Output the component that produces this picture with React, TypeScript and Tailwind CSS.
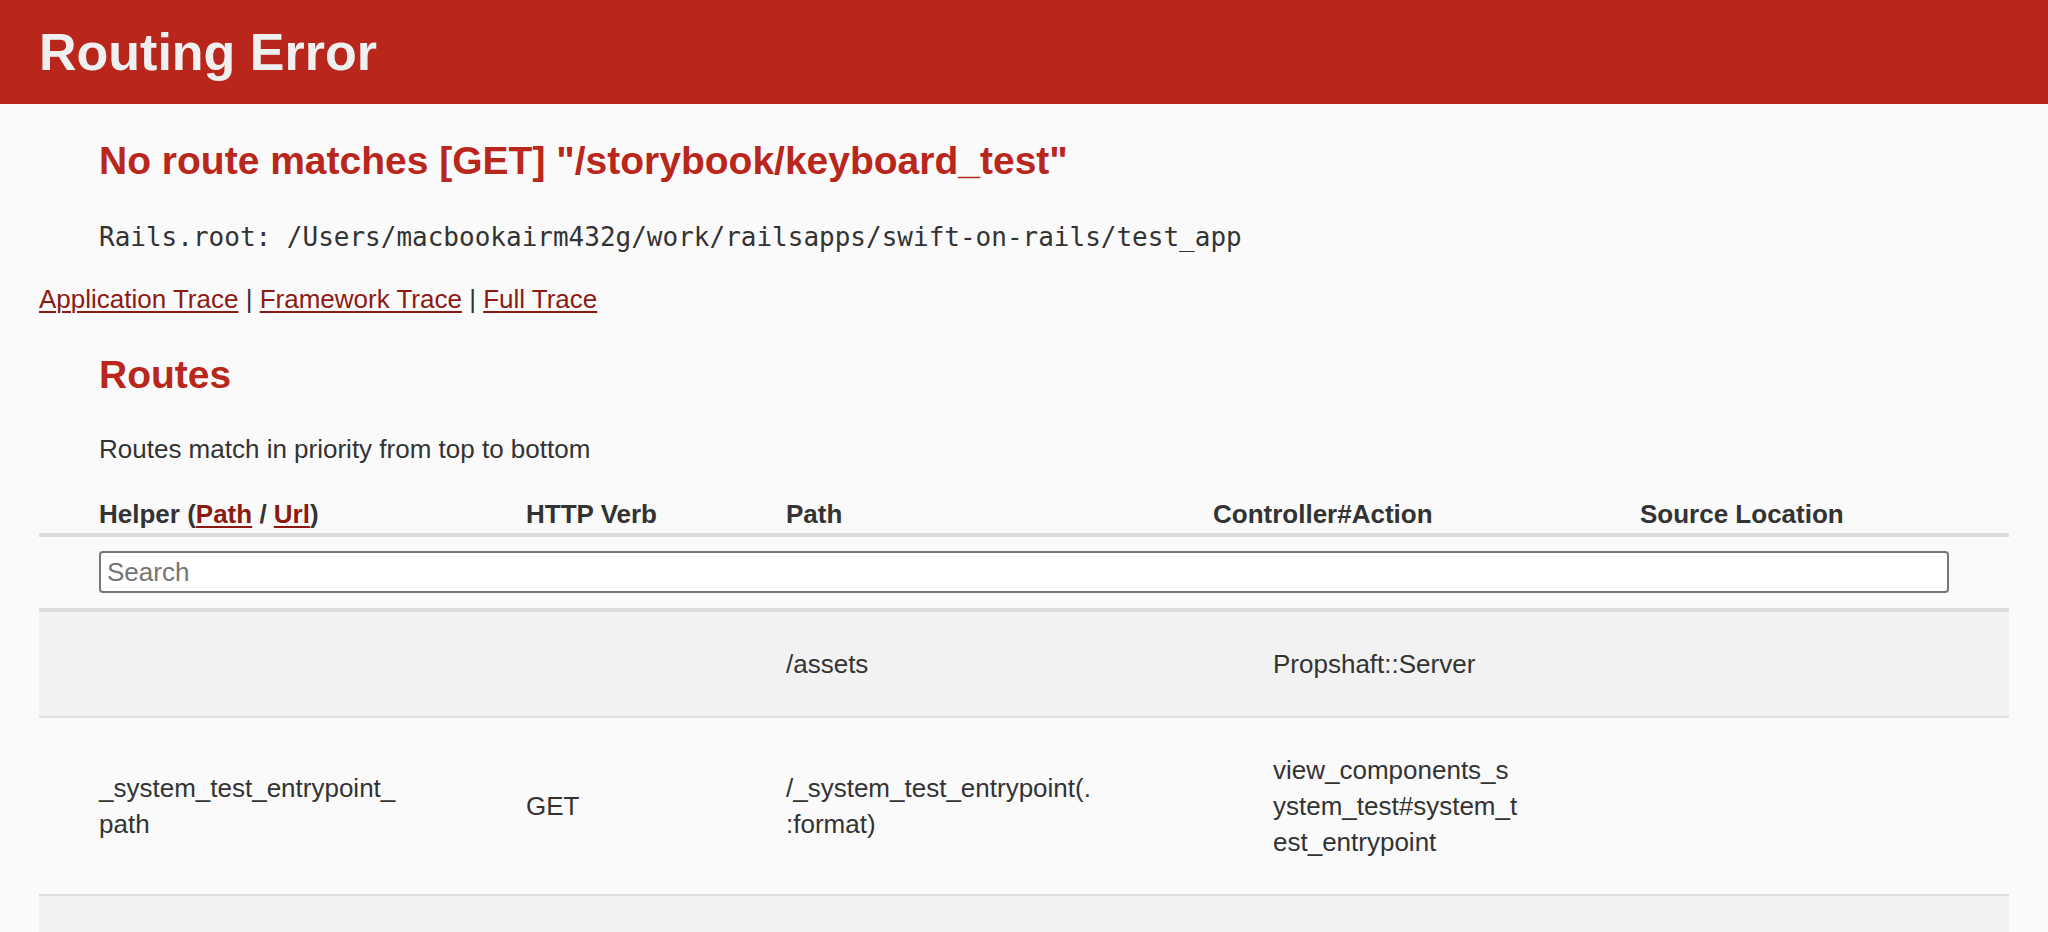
import React from "react";

const RED = "text-[#b9261b]";
const COLS = "grid grid-cols-[427px_260px_427px_427px_429px]";

type Route = {
  helper: string;
  verb: string;
  path: string;
  action: string;
};

const routes: Route[] = [
  { helper: "", verb: "", path: "/assets", action: "Propshaft::Server" },
  {
    helper: "_system_test_entrypoint_path",
    verb: "GET",
    path: "/_system_test_entrypoint(.:format)",
    action: "view_components_system_test#system_test_entrypoint",
  },
];

function TraceLink({ children }: { children: React.ReactNode }) {
  return (
    <a href="#" className="text-[#8c1a13] underline decoration-2 underline-offset-[3px]">
      {children}
    </a>
  );
}

export default function App() {
  return (
    <div className="min-h-screen bg-[#fafafa] text-[#333] font-['Liberation_Sans',Arial,sans-serif]">
      {/* Header */}
      <header className="h-[104px] flex items-center bg-[#b9261b] px-[39px] text-[#f0f0f0]">
        <h1 className="text-[52px] leading-[57px] font-bold">Routing Error</h1>
      </header>

      <div className="px-[39px]">
        <h2 className={`mt-[32px] pl-[60px] text-[39px] leading-[50px] font-bold ${RED}`}>
          No route matches [GET] "/storybook/keyboard_test"
        </h2>

        <p className="mt-[33px] pl-[60px] font-['DejaVu_Sans_Mono',monospace] text-[26px] leading-[36px]">
          Rails.root: /Users/macbookairm432g/work/railsapps/swift-on-rails/test_app
        </p>

        <div className="mt-[26px] text-[26px] leading-[36px]">
          <TraceLink>Application Trace</TraceLink> | <TraceLink>Framework Trace</TraceLink> |{" "}
          <TraceLink>Full Trace</TraceLink>
        </div>

        <h2 className={`mt-[33px] pl-[60px] text-[39px] leading-[50px] font-bold ${RED}`}>Routes</h2>

        <p className="mt-[31px] pl-[60px] text-[26px] leading-[36px]">
          Routes match in priority from top to bottom
        </p>

        {/* Route table */}
        <div className="mt-[29px] w-[1970px] text-[26px] leading-[36px]">
          <div className={`${COLS} h-[41px] border-b-4 border-[#dcdcdc] font-bold`}>
            <div className="px-[60px] whitespace-nowrap">
              Helper (<TraceLink>Path</TraceLink> / <TraceLink>Url</TraceLink>)
            </div>
            <div className="px-[60px] whitespace-nowrap">HTTP Verb</div>
            <div className="px-[60px]">Path</div>
            <div className="px-[60px]">Controller#Action</div>
            <div className="px-[60px] whitespace-nowrap">Source Location</div>
          </div>

          <div className="h-[75px] pt-[14px] pl-[60px] border-b-4 border-[#dcdcdc]">
            <input
              type="search"
              placeholder="Search"
              className="block w-[1850px] h-[42px] rounded-[4px] border-2 border-[#767676] bg-white px-[6px] text-[26px] text-[#333] outline-none placeholder:text-[#757575]"
            />
          </div>

          {routes.map((r, i) => (
            <div
              key={i}
              className={`${COLS} items-center border-b-2 border-[#dfdfdf] py-[34px] ${
                i % 2 === 0 ? "bg-[#f2f2f2]" : "bg-[#fafafa]"
              }`}
            >
              <div className="px-[60px] [overflow-wrap:anywhere]">{r.helper}</div>
              <div className="px-[60px]">{r.verb}</div>
              <div className="px-[60px] [overflow-wrap:anywhere]">{r.path}</div>
              <div className="px-[60px] [overflow-wrap:anywhere]">
                <p className="pl-[60px]">{r.action}</p>
              </div>
              <div className="px-[60px]" />
            </div>
          ))}

          <div className="h-[104px] bg-[#f2f2f2] border-b-2 border-[#dfdfdf]" />
        </div>
      </div>
    </div>
  );
}
